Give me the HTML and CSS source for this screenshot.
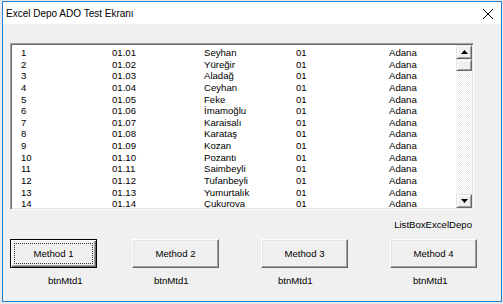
FILE: index.html
```html
<!DOCTYPE html>
<html lang="tr">
<head>
<meta charset="utf-8">
<title>Excel Depo ADO Test Ekranı</title>
<link rel="stylesheet" href="styles.css">
</head>
<body>
<div class="window">
  <div class="titlebar">
    <span class="title">Excel Depo ADO Test Ekranı</span>
    <svg class="close" width="12" height="12" viewBox="0 0 12 12"><path d="M1 1 L11 11 M11 1 L1 11" stroke="#000" stroke-width="1" fill="none"/></svg>
  </div>
  <div class="client">
    <div class="listbox">
      <div class="rows">
        <div class="row"><span>1</span><span>01.01</span><span>Seyhan</span><span>01</span><span>Adana</span></div>
        <div class="row"><span>2</span><span>01.02</span><span>Yüreğir</span><span>01</span><span>Adana</span></div>
        <div class="row"><span>3</span><span>01.03</span><span>Aladağ</span><span>01</span><span>Adana</span></div>
        <div class="row"><span>4</span><span>01.04</span><span>Ceyhan</span><span>01</span><span>Adana</span></div>
        <div class="row"><span>5</span><span>01.05</span><span>Feke</span><span>01</span><span>Adana</span></div>
        <div class="row"><span>6</span><span>01.06</span><span>İmamoğlu</span><span>01</span><span>Adana</span></div>
        <div class="row"><span>7</span><span>01.07</span><span>Karaisalı</span><span>01</span><span>Adana</span></div>
        <div class="row"><span>8</span><span>01.08</span><span>Karataş</span><span>01</span><span>Adana</span></div>
        <div class="row"><span>9</span><span>01.09</span><span>Kozan</span><span>01</span><span>Adana</span></div>
        <div class="row"><span>10</span><span>01.10</span><span>Pozantı</span><span>01</span><span>Adana</span></div>
        <div class="row"><span>11</span><span>01.11</span><span>Saimbeyli</span><span>01</span><span>Adana</span></div>
        <div class="row"><span>12</span><span>01.12</span><span>Tufanbeyli</span><span>01</span><span>Adana</span></div>
        <div class="row"><span>13</span><span>01.13</span><span>Yumurtalık</span><span>01</span><span>Adana</span></div>
        <div class="row"><span>14</span><span>01.14</span><span>Çukurova</span><span>01</span><span>Adana</span></div>
      </div>
      <div class="vscroll">
        <div class="sbtn"><svg width="7" height="4" viewBox="0 0 7 4"><path d="M3.5 0 L7 4 L0 4 Z" fill="#000"/></svg></div>
        <div class="thumb"></div>
        <div class="track"></div>
        <div class="sbtn"><svg width="7" height="4" viewBox="0 0 7 4"><path d="M0 0 L7 0 L3.5 4 Z" fill="#000"/></svg></div>
      </div>
    </div>
    <div class="caption">ListBoxExcelDepo</div>
    <div class="buttons">
      <div class="group g1">
        <div class="btn default"><span class="btn-face">Method 1</span></div>
        <div class="lbl l1">btnMtd1</div>
      </div>
      <div class="group g2">
        <div class="btn"><span class="btn-face">Method 2</span></div>
        <div class="lbl l2">btnMtd1</div>
      </div>
      <div class="group g3">
        <div class="btn"><span class="btn-face">Method 3</span></div>
        <div class="lbl l3">btnMtd1</div>
      </div>
      <div class="group g4">
        <div class="btn"><span class="btn-face">Method 4</span></div>
        <div class="lbl l4">btnMtd1</div>
      </div>
    </div>
  </div>
</div>
</body>
</html>
```

FILE: styles.css
```css
html, body {
  margin: 0;
  padding: 0;
}
body {
  background: #e9e9e9;
  font-family: "Liberation Sans", Arial, sans-serif;
  font-size: 9.6px;
  color: #000;
  width: 503px;
  height: 304px;
  overflow: hidden;
}
.window {
  margin: 1px 0 0 2px;
  width: 498px;
  height: 299px;
  border: 1px solid #1a82d6;
  background: #f0f0f0;
  display: flex;
  flex-direction: column;
}
.titlebar {
  height: 22px;
  flex: none;
  background: #fff;
  display: flex;
  align-items: center;
  justify-content: space-between;
  padding: 0 7px 0 3px;
}
.title {
  font-size: 10px;
  color: #000;
  padding-top: 1px;
}
.close {
  display: block;
  margin-top: 1px;
}
.client {
  flex: 1;
  padding: 19px 0 0 7px;
  background: #f0f0f0;
}
.listbox {
  width: 464px;
  height: 167px;
  box-sizing: border-box;
  display: flex;
  background: #fff;
  border-top: 1px solid #a0a0a0;
  border-left: 1px solid #a0a0a0;
  border-right: 1px solid #fff;
  border-bottom: 1px solid #fff;
  box-shadow: inset 1px 1px 0 #696969, inset -1px -1px 0 #e3e3e3;
  padding: 1px;
}
.rows {
  flex: 1;
  padding: 2px 0 0 9px;
  overflow: hidden;
}
.row {
  display: grid;
  grid-template-columns: 91px 92px 92px 93px auto;
  line-height: 11.65px;
  height: 11.65px;
  white-space: nowrap;
}
.vscroll {
  width: 16px;
  display: flex;
  flex-direction: column;
}
.sbtn, .thumb {
  box-sizing: border-box;
  background: #f0f0f0;
  border-top: 1px solid #e3e3e3;
  border-left: 1px solid #e3e3e3;
  border-right: 1px solid #696969;
  border-bottom: 1px solid #696969;
  box-shadow: inset 1px 1px 0 #fff, inset -1px -1px 0 #a0a0a0;
}
.sbtn {
  height: 14px;
  display: flex;
  align-items: center;
  justify-content: center;
}
.sbtn svg {
  display: block;
}
.thumb {
  height: 12px;
}
.track {
  flex: 1;
  background: repeating-conic-gradient(#fff 0 25%, #ececec 0 50%) 0 0 / 2px 2px;
}
.caption {
  width: 464px;
  box-sizing: border-box;
  text-align: right;
  padding-right: 2px;
  margin-top: 9px;
  line-height: 12px;
}
.buttons {
  display: flex;
  margin-top: 8px;
}
.group {
  width: 87px;
  display: flex;
  flex-direction: column;
}
.g2 { margin-left: 35px; }
.g3 { margin-left: 42px; }
.g4 { margin-left: 42px; }
.btn {
  position: relative;
  box-sizing: border-box;
  height: 29px;
  background: #f0f0f0;
  border-top: 1px solid #fff;
  border-left: 1px solid #fff;
  border-right: 1px solid #696969;
  border-bottom: 1px solid #696969;
  box-shadow: inset -1px -1px 0 #a0a0a0, inset 1px 1px 0 #e3e3e3;
  display: flex;
  align-items: center;
  justify-content: center;
}
.btn.default {
  border: 1px solid #000;
  box-shadow: inset 1px 1px 0 #fff, inset -1px -1px 0 #696969, inset -2px -2px 0 #a0a0a0;
}
.btn.default::after {
  content: "";
  position: absolute;
  left: 3px;
  top: 3px;
  right: 3px;
  bottom: 3px;
  border: 1px dotted #333;
}
.btn-face {
  line-height: 12px;
}
.lbl {
  margin-top: 7px;
  line-height: 11px;
  white-space: nowrap;
}
.l1 { padding-left: 38px; }
.l2 { padding-left: 22px; }
.l3 { padding-left: 17px; }
.l4 { padding-left: 23px; }
```
